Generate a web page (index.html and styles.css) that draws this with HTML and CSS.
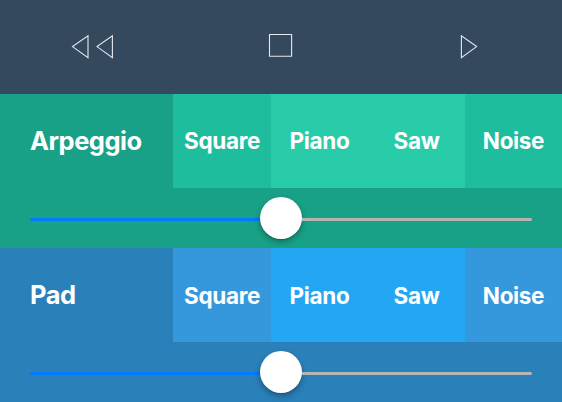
FILE: index.html
```
<!DOCTYPE html>
<html lang="en">
<head>
<meta charset="utf-8">
<title>Synth</title>
<link rel="stylesheet" href="styles.css">
</head>
<body>
<header class="transport">
  <svg class="icon" width="187" height="94" viewBox="0 0 187 94"><path d="M88 35.8V57.6L72.5 46.6ZM112.4 35.8V57.6L97 46.6Z"/></svg>
  <svg class="icon" width="188" height="94" viewBox="187 0 188 94"><path d="M269.5 34.5H291.6V56.2H269.5Z"/></svg>
  <svg class="icon" width="187" height="94" viewBox="375 0 187 94"><path d="M461.4 35.8V57.6L476.6 46.6Z"/></svg>
</header>
<section class="track green">
  <div class="voices">
    <h2 class="name">Arpeggio</h2>
    <div class="cell">Square</div>
    <div class="cell on">Piano</div>
    <div class="cell on">Saw</div>
    <div class="cell">Noise</div>
  </div>
  <div class="slider"><div class="fill"></div><div class="knob"></div><div class="rest"></div></div>
</section>
<section class="track blue">
  <div class="voices">
    <h2 class="name">Pad</h2>
    <div class="cell">Square</div>
    <div class="cell on">Piano</div>
    <div class="cell on">Saw</div>
    <div class="cell">Noise</div>
  </div>
  <div class="slider"><div class="fill"></div><div class="knob"></div><div class="rest"></div></div>
</section>
</body>
</html>
```
FILE: styles.css
```
body {
  margin: 0;
  width: 562px;
  height: 402px;
  overflow: hidden;
  font-family: Inter, "Liberation Sans", sans-serif;
  font-weight: 700;
  color: #fff;
}
.transport {
  display: flex;
  height: 94px;
  background: #35495e;
}
.icon {
  display: block;
  fill: none;
  stroke: #e4e9ed;
  stroke-width: 1.1;
}
.track { height: 154px; }
.green { background: #19a187; --cell: #1ebd9d; --on: #28cca8; }
.blue { background: #2a80b9; --cell: #3698dc; --on: #24a7f2; }
.voices {
  display: grid;
  grid-template-columns: 173px 98px 97px 97px 97px;
  height: 94px;
  line-height: 94px;
}
.name {
  margin: 0;
  padding-left: 30px;
  font-size: 25.5px;
  font-weight: 700;
  letter-spacing: -0.5px;
}
.cell {
  background: var(--cell);
  font-size: 22.5px;
  text-align: center;
  letter-spacing: -0.35px;
  height: 94px;
}
.blue .cell {
  height: 93px;
  padding-top: 1px;
}
.on, .blue .on { background: var(--on); }
.slider {
  display: flex;
  align-items: center;
  height: 60px;
  padding: 0 30px;
}
.fill, .rest {
  flex: 1;
  height: 3px;
  margin-top: 3px;
}
.fill { background: #007aff; border-radius: 2px 0 0 2px; }
.rest { background: #b5b5b5; border-radius: 0 2px 2px 0; }
.knob {
  width: 42px;
  height: 42px;
  border-radius: 50%;
  background: #fff;
  box-shadow: 0 3px 6px rgba(0, 0, 0, 0.3), 0 1px 1px rgba(0, 0, 0, 0.16);
}
```
